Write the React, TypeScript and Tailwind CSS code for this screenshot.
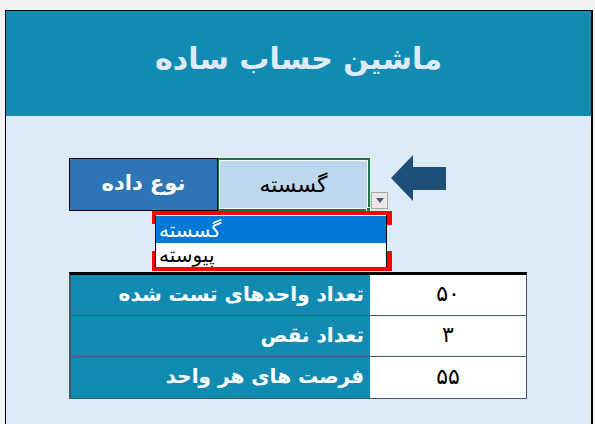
const fa = "font-['DejaVu_Sans','Noto_Sans',sans-serif]";

const rows = [
  { label: 'تعداد واحدهای تست شده', value: '۵۰' },
  { label: 'تعداد نقص', value: '۳' },
  { label: 'فرصت های هر واحد', value: '۵۵' },
];

function LeftArrow() {
  return (
    <svg width="55" height="46" viewBox="0 0 55 46" className="block">
      <polygon points="0,23 22,0 22,12 55,12 55,35 22,35 22,46" fill="#1f4e79" />
    </svg>
  );
}

export default function App() {
  return (
    <div className={`h-[424px] w-[595px] overflow-hidden bg-[#f2f2f2] pl-[5px] pt-[10px] ${fa}`}>
      <div className="flex h-[414px] w-[588px] flex-col border-l border-r-2 border-t border-black">
        {/* Header */}
        <div className="flex h-[105px] items-center justify-center bg-[#128bb3] pb-[10px]">
          <h1 dir="rtl" className="text-[30px] font-bold text-[#deebf7]">
            ماشین حساب ساده
          </h1>
        </div>

        {/* Body */}
        <div className="flex-1 bg-[#ddebf7] pl-[63px] pt-[42px]">
          <div className="relative">
            {/* Data type row */}
            <div className="flex">
              <div className="flex h-[53px] w-[149px] items-center justify-center border border-black bg-[#2e75b6] pb-[2px]">
                <span dir="rtl" className="text-[21px] font-bold text-white">نوع داده</span>
              </div>
              <div className="relative flex h-[53px] w-[152px] items-center justify-center border-2 border-l border-[#217346] bg-[#bdd7ee]">
                <div className="absolute inset-0 border border-white" />
                <span dir="rtl" className="text-[22px] text-black">گسسته</span>
                <div className="absolute -bottom-[3px] -right-[3px] h-[5px] w-[5px] border border-white bg-[#217346]" />
              </div>
              <div className="mb-[2px] ml-[1px] flex h-[17px] w-[17px] items-center justify-center self-end border border-[#a6a6a6] bg-[#e9e9e9]">
                <svg width="8" height="5" viewBox="0 0 8 5">
                  <polygon points="0,0 8,0 4,5" fill="#4d5b73" />
                </svg>
              </div>
              <div className="-mt-[3px] ml-[3px]">
                <LeftArrow />
              </div>
            </div>

            {/* space under the row, dropdown lies over it */}
            <div className="h-[61px]" />

            {/* Dropdown list */}
            <div className="absolute left-[83px] top-[53px] w-[240px]">
              <div className="h-[4px] bg-[#ff0000]" />
              <div className="flex h-[52px]">
                <div className="flex w-[3px] flex-col justify-between">
                  <div className="h-[9px] bg-[#ff0000]" />
                  <div className="h-[16px] bg-[#ff0000]" />
                </div>
                <div className="flex-1 border-x border-black bg-white pt-[1px]">
                  <div dir="rtl" className="flex h-[27px] items-center justify-end bg-[#0078d7] pl-[3px] text-[20px] text-white">
                    گسسته
                  </div>
                  <div dir="rtl" className="flex h-[24px] items-center justify-end pl-[3px] text-[20px] text-black">
                    پیوسته
                  </div>
                </div>
                <div className="flex w-[5px] flex-col justify-between">
                  <div className="h-[10px] bg-[#ff0000]" />
                  <div className="h-[16px] bg-[#ff0000]" />
                </div>
              </div>
              <div className="h-[4px] bg-[#ff0000]" />
            </div>

            {/* Table */}
            <div className="w-[458px] border-x border-b border-t-[3px] border-x-[#44546a] border-b-[#44546a] border-t-black">
              {rows.map((r, i) => (
                <div
                  key={r.label}
                  className={`flex h-[41px] ${i < rows.length - 1 ? 'border-b border-[#44546a]' : ''}`}
                >
                  <div
                    dir="rtl"
                    className="flex w-[300px] items-center border-l border-[#44546a] bg-[#128bb3] pr-[6px] pb-[3px] text-[20px] font-bold text-white"
                  >
                    {r.label}
                  </div>
                  <div className="flex flex-1 items-center justify-center bg-white pb-[3px] text-[22px] text-black">
                    {r.value}
                  </div>
                </div>
              ))}
            </div>
          </div>
        </div>
      </div>
    </div>
  );
}
